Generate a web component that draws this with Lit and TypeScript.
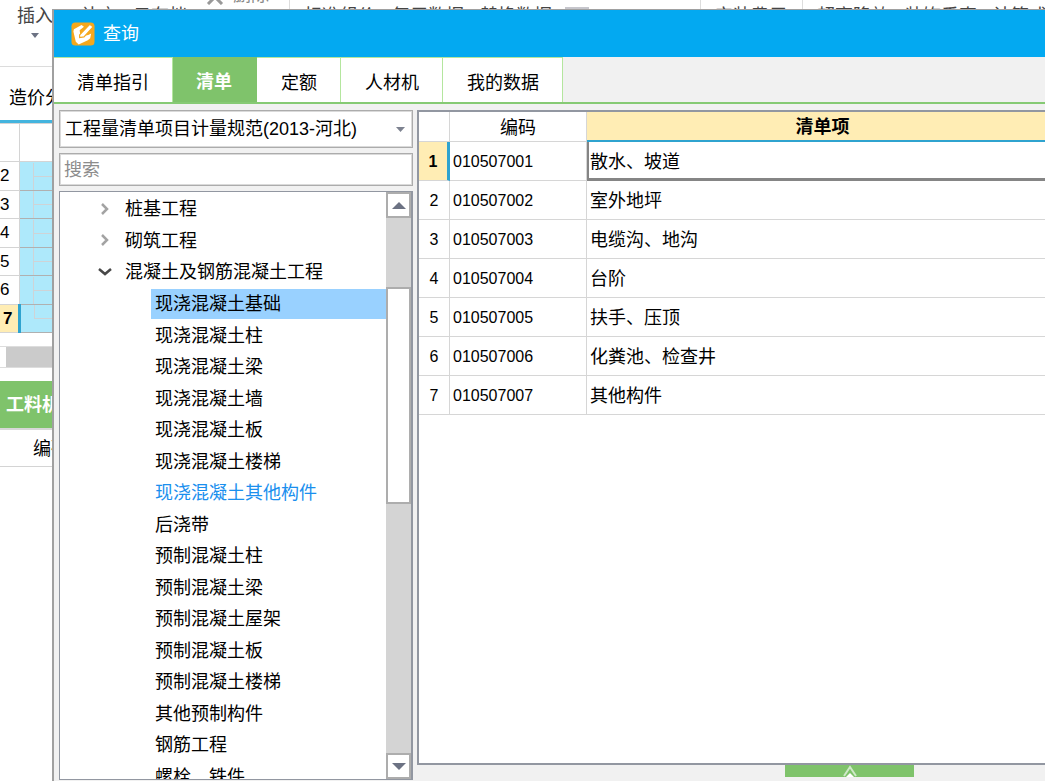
import { LitElement, html, css, svg } from "lit";
import { customElement, state } from "lit/decorators.js";
import { classMap } from "lit/directives/class-map.js";

const tabs = ["清单指引", "清单", "定额", "人材机", "我的数据"];

const tree = [
  "现浇混凝土基础", "现浇混凝土柱", "现浇混凝土梁", "现浇混凝土墙", "现浇混凝土板",
  "现浇混凝土楼梯", "现浇混凝土其他构件", "后浇带", "预制混凝土柱", "预制混凝土梁",
  "预制混凝土屋架", "预制混凝土板", "预制混凝土楼梯", "其他预制构件", "钢筋工程", "螺栓、铁件",
];

const items = ["散水、坡道", "室外地坪", "电缆沟、地沟", "台阶", "扶手、压顶", "化粪池、检查井", "其他构件"];

const tri = (up: boolean) => html`<svg width="14" height="7" viewBox="0 0 14 7">
  ${up ? svg`<path d="M0 7 7 0l7 7z" fill="#6c7283" />` : svg`<path d="M0 0h14L7 7z" fill="#6c7283" />`}
</svg>`;

@customElement("app-root")
export class AppRoot extends LitElement {
  @state() private active = 1;

  static styles = css`
    :host {
      display: block;
      position: relative;
      height: 100vh;
      overflow: hidden;
      background: #fff;
      color: #000;
      font: 18px/24px "Liberation Sans", "Noto Sans CJK SC", sans-serif;
    }
    * { box-sizing: border-box; }
    svg { display: block; flex: none; }
    button { font: inherit; color: inherit; border: 0; padding: 0; background: none; }

    /* main window behind the dialog */
    .ribbon { display: flex; height: 67px; border-bottom: 1px solid #dcdcdc; color: #444; white-space: nowrap; }
    .ribbon button { flex: none; display: flex; flex-direction: column; align-items: center; padding-top: 4px; }
    .insert { margin-left: 17px; gap: 5px; }
    .ribbon .gap-l { margin-left: 28px; }
    .ribbon .gap { margin-left: 16px; }
    .ribbon .small { flex-direction: row; align-items: flex-start; margin-left: 19px; padding: 0; gap: 9px; color: #888; height: 6px; }
    .small span { line-height: 24px; margin-top: -17px; }
    .sep { flex: none; width: 1px; height: 60px; margin-left: 20px; background: #ddd; }
    .sep.far { margin-left: 111px; }
    .sep.near { margin-left: 15px; }
    .sep + button { margin-left: 14px; }
    .more { flex: none; width: 24px; height: 6px; margin: 7px 0 0 13px; background: #c6c6cc; }
    .main-tab { height: 56px; padding: 19px 0 0 9px; border-bottom: 3px solid #43b4de; white-space: nowrap; }
    .main-grid { border-collapse: collapse; table-layout: fixed; width: 120px; }
    .main-grid td { padding: 0; height: 28px; font-size: 17px; line-height: 24px; border: 1px solid #d4d4d4; }
    .main-grid tr:nth-child(even) td { height: 29px; }
    .main-grid td:first-child { width: 19px; border-left: 0; }
    .main-grid tr.top td { height: 38px; }
    .main-grid tr:not(.top) td + td { background: #aee9fb; border-bottom-color: #b0b0b0; padding-left: 13px; }
    .branch { display: block; height: 27px; border-left: 1px solid #cfd3d6; background: linear-gradient(#cfd3d6, #cfd3d6) 0 13px / 100% 1px no-repeat; }
    .main-grid tr.cur td:first-child { background: #ffedb4; font-weight: 700; border-right: 3px solid #2fa3cf; padding-left: 3px; }
    .main-grid tr.cur .branch { height: 14px; margin-bottom: 13px; }
    .hscroll { display: flex; height: 22px; margin-top: 13px; border: 1px solid #ddd; border-left: 0; }
    .hscroll span { flex: 1; margin-left: 6px; background: #cbcbcb; }
    .panel-tab { height: 47px; margin-top: 13px; padding: 12px 0 0 6px; background: #7fc36b; color: #fff; font-weight: 700; }
    .panel-head { height: 39px; padding: 7px 0 0 33px; border-top: 2px solid #d8d8d8; border-bottom: 1px solid #d4d4d4; }

    /* query dialog */
    .dialog {
      position: absolute;
      inset: 9px 0 0 52px;
      display: flex;
      flex-direction: column;
      border: solid #a0a0a0;
      border-width: 1px 0 0 2px;
      background: #f1f1f1;
    }
    .title { flex: none; display: flex; align-items: center; gap: 8px; height: 47px; padding-left: 17px; background: #03a9f1; color: #fff; }
    .title h1 { margin: 0; font-size: 18px; font-weight: 400; }
    .tabs { flex: none; display: flex; height: 47px; padding-bottom: 1px; border-bottom: 2px solid #86ca74; }
    .tab { height: 45px; padding: 6px 23px 0 24px; background: #fff; border: solid #b4e69e; border-width: 1px 1px 0 0; }
    .tab:first-child { padding-left: 23px; }
    .tab.on { background: #7fc36b; border-color: #7fc36b; color: #fff; font-weight: 700; padding: 3px 24px 0 23px; }
    .body { flex: 1; min-height: 0; display: grid; grid-template-columns: 354px minmax(0, 1fr); column-gap: 4px; padding: 6px 0 1px 5px; }
    .left { display: flex; flex-direction: column; gap: 5px; min-height: 0; }
    .combo { position: relative; flex: none; display: flex; }
    .combo svg { position: absolute; right: 8px; top: 17px; pointer-events: none; }
    select, input { flex: none; width: 100%; font: inherit; color: #000; border: 1px solid #acacac; outline: 1px solid #dadada; outline-offset: -2px; border-radius: 0; background: #fff; margin: 0; appearance: none; }
    select { height: 38px; padding: 0 5px; }
    input { height: 33px; padding: 2px 4px 0; }
    input::placeholder { color: #8c8c8c; opacity: 1; }
    .treebox { flex: 1; min-height: 0; display: flex; overflow: hidden; background: #fff; border: 2px solid #9297a1; border-width: 1px 2px 1px 1px; }
    .tree { flex: 1; margin: 0; padding: 2px 0 0; list-style: none; line-height: 31px; white-space: nowrap; }
    .tree li { display: flex; align-items: center; height: 31px; }
    .tree li:nth-child(even) { height: 32px; }
    .node { padding-left: 38px; gap: 13px; }
    .leaf { padding-left: 91px; }
    .leaf span { flex: 1; padding-left: 4px; height: 30px; line-height: 30px; }
    .leaf.sel span { background: #99d1ff; }
    .leaf.hot { color: #1a8fee; }
    .bar { flex: none; width: 25px; display: flex; flex-direction: column; background: #d4d4d4; }
    .bar button, .thumb { flex: none; display: flex; align-items: center; justify-content: center; height: 26px; border: 2px solid #adadad; background: #fff; }
    .before { flex: 70; }
    .thumb { flex: 215; }
    .after { flex: 251; }
    .right { display: flex; flex-direction: column; min-width: 0; }
    .gridbox { flex: 1; overflow: hidden; background: #fff; border: solid #9297a1; border-width: 2px 0 2px 2px; }
    .grid { width: calc(100% + 14px); border-collapse: separate; border-spacing: 0; table-layout: fixed; }
    .grid th, .grid td { height: 39px; padding: 2px 0 0 3px; text-align: left; border: solid #d6d6d6; border-width: 0 1px 1px 0; line-height: 24px; font-weight: 400; }
    .grid thead th { height: 30px; padding: 2px 0 0; text-align: center; }
    .grid thead th.cur { font-weight: 700; background: #ffedb4; border-bottom: 2px solid #2fa3cf; }
    .grid tbody th { padding: 2px 0 0; text-align: center; font-size: 16px; }
    .grid .code { font-size: 16px; }
    .grid tbody tr.cur th { background: #ffedb4; font-weight: 700; border-right: 3px solid #2fa3cf; }
    .grid tr.cur td.name { border-bottom: 3px solid #858585; border-left: 2px solid #858585; padding: 4px 0 0 1px; }
    .c1 { width: 31px; }
    .c2 { width: 137px; }
    .foot { flex: none; height: 15px; padding-left: 368px; }
    .foot button { display: flex; justify-content: center; width: 129px; height: 12px; background: #7fc36b; }
  `;

  render() {
    return html`
      <div class="ribbon">
        <button class="insert">插入<svg width="8" height="5" viewBox="0 0 8 5"><path d="M0 0h8L4 5z" fill="#6c7283" /></svg></button>
        <button class="gap-l">补充</button>
        <button class="gap">云存档</button>
        <button class="small"><svg width="18" height="5" viewBox="0 0 18 5"><path d="M2 4l6-6M16 4 10-2" stroke="#999" stroke-width="3" /></svg><span>删除</span></button>
        <i class="sep"></i>
        <button>标准组价</button>
        <button class="gap">复用数据</button>
        <button class="gap">替换数据</button>
        <i class="more"></i>
        <i class="sep far"></i>
        <button>安装费用</button>
        <i class="sep near"></i>
        <button>超高降效</button>
        <button class="gap">装饰垂直</button>
        <button class="gap">计算式</button>
      </div>
      <div class="main-tab">造价分析</div>
      <table class="main-grid">
        <tr class="top"><td></td><td></td></tr>
        ${[2, 3, 4, 5, 6, 7].map((n) => html`<tr class=${n === 7 ? "cur" : ""}><td>${n}</td><td><span class="branch"></span></td></tr>`)}
      </table>
      <div class="hscroll"><span></span></div>
      <div class="panel-tab">工料机显示</div>
      <div class="panel-head">编码</div>

      <section class="dialog" role="dialog" aria-labelledby="title">
        <header class="title">
          <svg width="24" height="24" viewBox="0 0 25 25">
            <rect x=".5" y=".5" width="24" height="24" rx="4" fill="#f6a81c" />
            <path d="M3 7.500 11 3l2.500 2-4.500 3.500 1 6.500 8-1.500 3-1.500-1 5-2.500 2L8 23.500l-3-3L2.500 10z" fill="#fff" />
            <path d="M9 13.500 19.500 2.500l3.500 2.500-9.500 10.500-4.500.8z" fill="#fff" stroke="#f6a81c" stroke-width="1.200" />
          </svg>
          <h1 id="title">查询</h1>
        </header>
        <nav class="tabs" role="tablist">
          ${tabs.map((t, i) => html`<button role="tab" class=${classMap({ tab: true, on: i === this.active })}
            aria-selected=${i === this.active} @click=${() => (this.active = i)}>${t}</button>`)}
        </nav>
        <div class="body">
          <div class="left">
            <div class="combo">
              <select aria-label="规范"><option>工程量清单项目计量规范(2013-河北)</option></select>
              <svg width="9" height="5" viewBox="0 0 9 5"><path d="M0 0h9L4.500 5z" fill="#7d8290" /></svg>
            </div>
            <input type="search" placeholder="搜索" aria-label="搜索" />
            <div class="treebox">
              <ul class="tree" role="tree">
                ${["桩基工程", "砌筑工程"].map((t) => html`<li class="node" role="treeitem">
                  <svg width="14" height="14" viewBox="0 0 14 14"><path d="M4 1l5 5-5 5" fill="none" stroke="#a3a3a3" stroke-width="2.500" /></svg>${t}</li>`)}
                <li class="node" role="treeitem">
                  <svg width="14" height="14" viewBox="0 0 14 14"><path d="M1 3l6 5 6-5" fill="none" stroke="#484848" stroke-width="2.500" /></svg>混凝土及钢筋混凝土工程</li>
                ${tree.map((t, i) => html`<li role="treeitem" class=${classMap({ leaf: true, sel: i === 0, hot: i === 6 })}><span>${t}</span></li>`)}
              </ul>
              <div class="bar">
                <button aria-label="向上">${tri(true)}</button>
                <div class="before"></div>
                <div class="thumb"></div>
                <div class="after"></div>
                <button aria-label="向下">${tri(false)}</button>
              </div>
            </div>
          </div>
          <div class="right">
            <div class="gridbox">
              <table class="grid">
                <colgroup><col class="c1" /><col class="c2" /><col /></colgroup>
                <thead><tr><th></th><th>编码</th><th class="cur">清单项</th></tr></thead>
                <tbody>
                  ${items.map((t, i) => html`<tr class=${i === 0 ? "cur" : ""}>
                    <th>${i + 1}</th><td class="code">01050700${i + 1}</td><td class="name">${t}</td></tr>`)}
                </tbody>
              </table>
            </div>
            <div class="foot">
              <button aria-label="展开">
                <svg width="14" height="12" viewBox="0 0 14 12"><path d="M1 11 7 2l6 9" fill="none" stroke="#cfe9c8" stroke-width="2" /><path d="M3 12l4-4 4 4z" fill="#fff" /></svg>
              </button>
            </div>
          </div>
        </div>
      </section>
    `;
  }
}
